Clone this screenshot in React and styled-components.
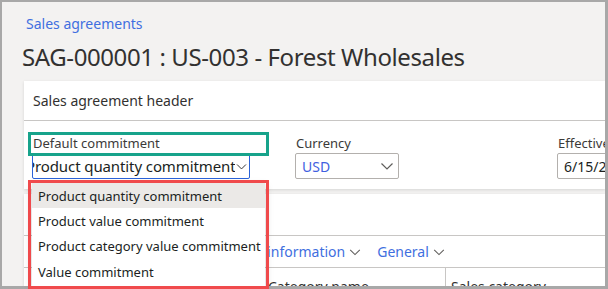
import React from "react";
import styled, { createGlobalStyle } from "styled-components";

const GlobalStyle = createGlobalStyle`
  html, body { margin: 0; padding: 0; background: #f3f2f1; }
  body { font-family: "Noto Sans", "Open Sans", sans-serif; }
`;

const Screen = styled.div`
  position: relative;
  width: 608px;
  height: 289px;
`;

const Frame = styled.div`
  box-sizing: border-box;
  width: 608px;
  height: 289px;
  overflow: hidden;
  background: #f3f2f1;
  border: 2px solid #a8a8a8;
  border-right-width: 3px;
  border-bottom-width: 3px;
`;

const Breadcrumb = styled.div`
  margin: 12px 0 0 24px;
  font-size: 14px;
  line-height: 20px;
  color: #3f6fe0;
`;

const Title = styled.h1`
  margin: 7px 0 0 20px;
  font-size: 24px;
  line-height: 32px;
  font-weight: 400;
  letter-spacing: -0.4px;
  color: #323130;
`;

const Card = styled.div`
  margin: ${(p) => p.$top || 0}px 0 0 22px;
  background: #fff;
  box-shadow: 0 1px 3px rgba(0, 0, 0, 0.12);
`;

const CardTitle = styled.div`
  height: 39px;
  padding-left: 9px;
  display: flex;
  align-items: center;
  font-size: 14px;
  color: #323130;
  border-bottom: 1px solid #c8c6c4;
`;

const FieldRow = styled.div`
  display: flex;
  padding: 13px 0 10px 8px;
  height: 45px;
`;

const Field = styled.div`
  width: ${(p) => p.$w}px;
  flex: none;
`;

const Label = styled.div`
  font-size: 13px;
  line-height: 19px;
  color: #3b3a39;
  padding-left: 1px;
`;

const Select = styled.div`
  box-sizing: border-box;
  width: ${(p) => p.$w}px;
  height: 26px;
  display: flex;
  align-items: center;
  border: 1px solid ${(p) => (p.$focus ? "#2b63d8" : "#b3b0ad")};
  border-radius: 2px;
  padding: 0 ${(p) => (p.$focus ? 1 : 3)}px 0 ${(p) => (p.$focus ? 0 : 6)}px;
  overflow: hidden;
  font-size: ${(p) => p.$size || 14}px;
  color: ${(p) => p.$color || "#201f1e"};
`;

const SelectText = styled.span`
  flex: 1;
  min-width: 0;
  white-space: nowrap;
  overflow: hidden;
  letter-spacing: ${(p) => (p.$shift ? "-0.1px" : "normal")};
  text-indent: ${(p) => p.$shift || 0}px;
`;

const Chevron = ({ size = 16, color = "#605e5c" }) => (
  <svg width={size} height={size} viewBox="0 0 16 16" fill="none">
    <path d="M2.5 5.5 L8 11 L13.5 5.5" stroke={color} strokeWidth="1.2" />
  </svg>
);

const Spacer = styled.div`
  height: ${(p) => p.$h}px;
  border-bottom: 1px solid #c8c6c4;
`;

const Tabs = styled.div`
  height: 31px;
  display: flex;
  align-items: center;
  gap: 15px;
  padding-left: 188px;
  font-size: 14px;
  color: #3f6fe0;
  border-bottom: 1px solid #c8c6c4;
`;

const Tab = styled.span`
  display: flex;
  align-items: center;
  gap: 3px;
  white-space: nowrap;
`;

const HeadRow = styled.div`
  display: flex;
  height: 30px;
  font-size: 14px;
  color: #323130;
`;

const HeadCell = styled.div`
  width: ${(p) => p.$w}px;
  flex: none;
  padding: 9px 0 0 5px;
  box-sizing: border-box;
  border-right: ${(p) => (p.$line ? "1px solid #c8c6c4" : "none")};
  white-space: nowrap;
  overflow: hidden;
`;

const Outline = styled.div`
  position: absolute;
  left: ${(p) => p.$x}px;
  top: ${(p) => p.$y}px;
  width: ${(p) => p.$w}px;
  height: ${(p) => p.$h}px;
  box-sizing: border-box;
  border: 3px solid ${(p) => p.$color};
`;

const Menu = styled.div`
  position: absolute;
  left: 32px;
  top: 183px;
  width: 233px;
  padding-bottom: 2px;
  background: #fff;
  box-shadow: 0 3px 8px rgba(0, 0, 0, 0.22);
`;

const MenuItem = styled.div`
  height: 25.3px;
  display: flex;
  align-items: center;
  padding-left: 6px;
  font-size: 13px;
  color: #201f1e;
  white-space: nowrap;
  background: ${(p) => (p.$active ? "#ebe9e7" : "transparent")};
`;

const options = [
  "Product quantity commitment",
  "Product value commitment",
  "Product category value commitment",
  "Value commitment",
];

export default function App() {
  return (
    <>
      <GlobalStyle />
      <Screen>
        <Frame>
          <Breadcrumb>Sales agreements</Breadcrumb>
          <Title>SAG-000001 : US-003 - Forest Wholesales</Title>
          <Card $top={8}>
            <CardTitle>Sales agreement header</CardTitle>
            <FieldRow>
              <Field $w={263}>
                <Label>Default commitment</Label>
                <Select $w={218} $size={15} $focus>
                  <SelectText $shift={-7}>Product quantity commitment</SelectText>
                  <Chevron size={13} color="#323130" />
                </Select>
              </Field>
              <Field $w={262}>
                <Label>Currency</Label>
                <Select $w={104} $color="#3f5fe0">
                  <SelectText>USD</SelectText>
                  <Chevron />
                </Select>
              </Field>
              <Field $w={60}>
                <Label>Effective</Label>
                <Select $w={80}>
                  <SelectText>6/15/2021</SelectText>
                </Select>
              </Field>
            </FieldRow>
          </Card>
          <Card $top={5}>
            <Spacer $h={41} />
            <Tabs>
              <Tab>
                Product information <Chevron size={14} />
              </Tab>
              <Tab>
                General <Chevron size={14} />
              </Tab>
            </Tabs>
            <HeadRow>
              <HeadCell $w={39} $line>✓</HeadCell>
              <HeadCell $w={169} $line>Item number</HeadCell>
              <HeadCell $w={31}>Item name</HeadCell>
              <HeadCell $w={183} $line>Category name</HeadCell>
              <HeadCell $w={150}>Sales category</HeadCell>
            </HeadRow>
          </Card>
        </Frame>
        <Outline $x={28} $y={132} $w={241} $h={24} $color="#17a38b" />
        <Menu>
          {options.map((o, i) => (
            <MenuItem key={o} $active={i === 0}>
              {o}
            </MenuItem>
          ))}
        </Menu>
        <Outline $x={28} $y={180} $w={241} $h={109} $color="#f04a4c" />
      </Screen>
    </>
  );
}
